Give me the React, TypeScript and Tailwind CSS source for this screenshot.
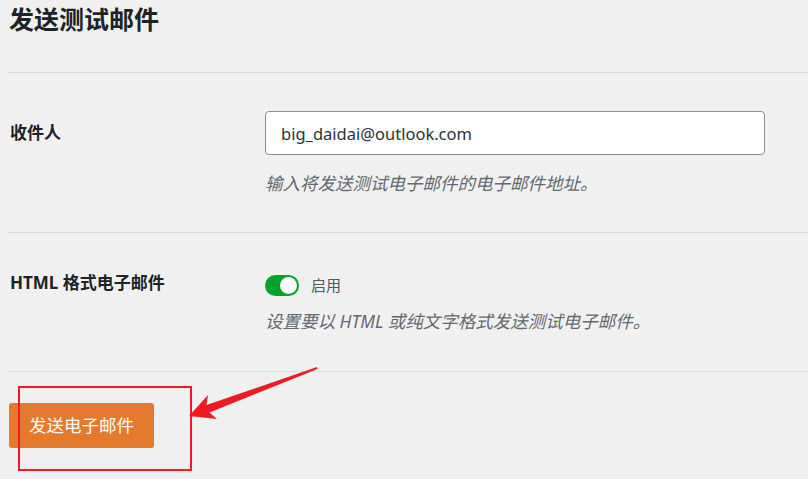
import React from "react"

const font = "font-['Segoe_UI','Noto_Sans','Noto_Sans_CJK_SC',sans-serif]"

function Toggle() {
  return (
    <span className="relative inline-flex h-[21px] w-[34px] items-center rounded-full bg-[#00a32a]">
      <span className="absolute right-[2px] top-[2px] h-[17px] w-[17px] rounded-full bg-white" />
    </span>
  )
}

export default function App() {
  return (
    <div className={`relative min-h-[479px] overflow-hidden bg-[#f0f0f1] pl-[8px] text-[#1d2327] ${font}`}>
      <div className="h-[72px] pl-[1px] pt-[6px]">
        <h2 className="text-[25px] font-bold leading-[26px]">发送测试邮件</h2>
      </div>

      <div className="flex h-[160px] border-t border-[#dcdcde]">
        <div className="w-[257px] pl-[2px] pt-[38px]">
          <div className="flex h-[44px] items-center text-[17px] font-bold">收件人</div>
        </div>
        <div className="pt-[38px]">
          <input
            className="h-[44px] w-[500px] rounded-[4px] border border-[#8c8f94] bg-white px-[15px] text-[16.5px] text-[#2c3338] outline-none"
            defaultValue="big_daidai@outlook.com"
          />
          <p className="mt-[16px] text-[17.5px] italic leading-[24px] text-[#646970]">
            输入将发送测试电子邮件的电子邮件地址。
          </p>
        </div>
      </div>

      <div className="flex h-[139px] border-t border-[#dcdcde]">
        <div className="w-[257px] pl-[2px] pt-[38px]">
          <div className="flex h-[24px] items-center text-[17px] font-bold">HTML 格式电子邮件</div>
        </div>
        <div className="pt-[41px]">
          <div className="flex h-[22px] items-center gap-[12px]">
            <Toggle />
            <span className="text-[15px] text-[#50575e]">启用</span>
          </div>
          <p className="mt-[13px] text-[17.5px] italic leading-[24px] text-[#646970]">
            设置要以 HTML 或纯文字格式发送测试电子邮件。
          </p>
        </div>
      </div>

      <div className="border-t border-[#dcdcde] pl-[1px] pt-[31px]">
        <button className="h-[45px] rounded-[3px] bg-[#e47a2e] px-[20px] text-[17.5px] text-white">
          发送电子邮件
        </button>
      </div>

      <div className="absolute left-[18px] top-[386px] h-[85px] w-[174px] border-2 border-[#ed1c24]" />
      <svg className="absolute left-0 top-0" width="808" height="479" viewBox="0 0 808 479">
        <polygon
          points="189,416 208,395 206.5,405 317,367 317.5,369 209.5,412.5 217,419"
          fill="#ed1c24"
        />
      </svg>
    </div>
  )
}
